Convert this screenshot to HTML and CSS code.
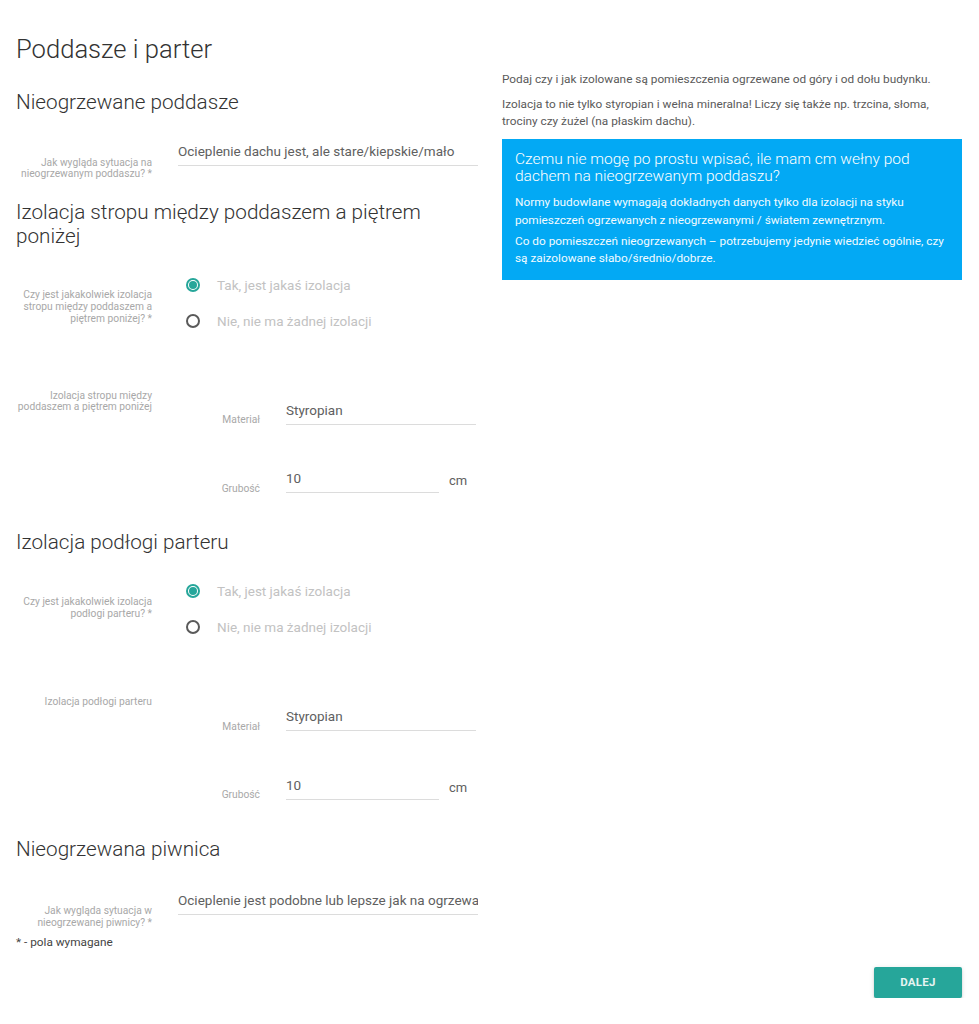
FILE: index.html
```html
<!DOCTYPE html>
<html lang="pl">
<head>
<meta charset="utf-8">
<title>Poddasze i parter</title>
<link rel="stylesheet" href="styles.css">
</head>
<body>
<div class="page">
  <div class="columns">
    <main class="left">
      <h1 class="title">Poddasze i parter</h1>

      <h2 class="section-title st-first">Nieogrzewane poddasze</h2>
      <div class="field f-first">
        <div class="field-label">Jak wygląda sytuacja na nieogrzewanym poddaszu? *</div>
        <div class="input">Ocieplenie dachu jest, ale stare/kiepskie/mało</div>
      </div>

      <h2 class="section-title st-after-field">Izolacja stropu między poddaszem a piętrem poniżej</h2>
      <div class="radio-field">
        <div class="radio-label">Czy jest jakakolwiek izolacja stropu między poddaszem a piętrem poniżej? *</div>
        <div class="radio-options">
          <div class="radio-option">
            <svg class="radio" width="14" height="14" viewBox="0 0 14 14"><circle cx="7" cy="7" r="6" fill="none" stroke="#26a69a" stroke-width="2"/><circle cx="7" cy="7" r="4" fill="#26a69a"/></svg>
            <span class="radio-text">Tak, jest jakaś izolacja</span>
          </div>
          <div class="radio-option">
            <svg class="radio" width="14" height="14" viewBox="0 0 14 14"><circle cx="7" cy="7" r="6" fill="none" stroke="#5a5a5a" stroke-width="2"/></svg>
            <span class="radio-text">Nie, nie ma żadnej izolacji</span>
          </div>
        </div>
      </div>
      <div class="group">
        <div class="group-label">Izolacja stropu między poddaszem a piętrem poniżej</div>
        <div class="subfields">
          <div class="subfield">
            <div class="sub-label">Materiał</div>
            <div class="input">Styropian</div>
          </div>
          <div class="subfield">
            <div class="sub-label">Grubość</div>
            <div class="thickness">
              <div class="input input-short">10</div>
              <span class="unit">cm</span>
            </div>
          </div>
        </div>
      </div>

      <h2 class="section-title st-after-group">Izolacja podłogi parteru</h2>
      <div class="radio-field">
        <div class="radio-label">Czy jest jakakolwiek izolacja podłogi parteru? *</div>
        <div class="radio-options">
          <div class="radio-option">
            <svg class="radio" width="14" height="14" viewBox="0 0 14 14"><circle cx="7" cy="7" r="6" fill="none" stroke="#26a69a" stroke-width="2"/><circle cx="7" cy="7" r="4" fill="#26a69a"/></svg>
            <span class="radio-text">Tak, jest jakaś izolacja</span>
          </div>
          <div class="radio-option">
            <svg class="radio" width="14" height="14" viewBox="0 0 14 14"><circle cx="7" cy="7" r="6" fill="none" stroke="#5a5a5a" stroke-width="2"/></svg>
            <span class="radio-text">Nie, nie ma żadnej izolacji</span>
          </div>
        </div>
      </div>
      <div class="group">
        <div class="group-label">Izolacja podłogi parteru</div>
        <div class="subfields">
          <div class="subfield">
            <div class="sub-label">Materiał</div>
            <div class="input">Styropian</div>
          </div>
          <div class="subfield">
            <div class="sub-label">Grubość</div>
            <div class="thickness">
              <div class="input input-short">10</div>
              <span class="unit">cm</span>
            </div>
          </div>
        </div>
      </div>

      <h2 class="section-title st-after-group">Nieogrzewana piwnica</h2>
      <div class="field f-last">
        <div class="field-label">Jak wygląda sytuacja w nieogrzewanej piwnicy? *</div>
        <div class="input">Ocieplenie jest podobne lub lepsze jak na ogrzewa</div>
      </div>

      <p class="required-note">* - pola wymagane</p>
    </main>

    <aside class="right">
      <p class="intro">Podaj czy i jak izolowane są pomieszczenia ogrzewane od góry i od dołu budynku.</p>
      <p class="intro intro-last">Izolacja to nie tylko styropian i wełna mineralna! Liczy się także np. trzcina, słoma, trociny czy żużel (na płaskim dachu).</p>
      <div class="info">
        <h3 class="info-title">Czemu nie mogę po prostu wpisać, ile mam cm wełny pod dachem na nieogrzewanym poddaszu?</h3>
        <p class="info-text">Normy budowlane wymagają dokładnych danych tylko dla izolacji na styku pomieszczeń ogrzewanych z nieogrzewanymi / światem zewnętrznym.</p>
        <p class="info-text">Co do pomieszczeń nieogrzewanych – potrzebujemy jedynie wiedzieć ogólnie, czy są zaizolowane słabo/średnio/dobrze.</p>
      </div>
    </aside>
  </div>

  <div class="footer">
    <button class="btn" type="button">DALEJ</button>
  </div>
</div>
</body>
</html>
```

FILE: styles.css
```css
html, body {
  margin: 0;
  padding: 0;
  background: #ffffff;
}

body {
  font-family: Roboto, "Liberation Sans", Arial, sans-serif;
  color: #444;
}

.page {
  width: 979px;
  box-sizing: border-box;
  padding: 0 17px 0 16px;
}

.columns {
  display: flex;
  gap: 24px;
}

.left {
  width: 462px;
  flex: none;
}

.right {
  width: 460px;
  flex: none;
  padding-top: 71px;
}

/* headings */
.title {
  margin: 34px 0 0;
  font-size: 25.6px;
  line-height: 30px;
  font-weight: 300;
  color: #333;
}

.section-title {
  margin: 0;
  font-size: 20.7px;
  line-height: 24px;
  font-weight: 300;
  color: #333;
}

.st-first { margin-top: 26px; }
.st-after-field { margin-top: 21px; }
.st-after-group { margin-top: 35px; }

/* simple field */
.field {
  display: grid;
  grid-template-columns: 136px 300px;
  column-gap: 26px;
  align-items: start;
}

.f-first { margin-top: 23px; }
.f-last { margin-top: 25px; }

.field-label,
.radio-label,
.group-label,
.sub-label {
  font-size: 10.25px;
  line-height: 11.2px;
  color: #a8a8a8;
  text-align: right;
}

.field-label { padding-top: 19.5px; }

.input {
  height: 28px;
  line-height: 28px;
  border-bottom: 1px solid #dcdcdc;
  font-size: 13.5px;
  color: #606060;
  white-space: nowrap;
  overflow: hidden;
}

/* radio field */
.radio-field {
  display: grid;
  grid-template-columns: 136px 300px;
  column-gap: 26px;
  margin-top: 19px;
}

.radio-label {
  padding-top: 22.5px;
  line-height: 11.6px;
}

.radio-option {
  height: 36px;
  display: flex;
  align-items: center;
  padding-left: 8px;
}

.radio {
  flex: none;
  display: block;
}

.radio-text {
  margin-left: 17px;
  font-size: 13.5px;
  color: #c2c2c2;
}

/* grouped fields */
.group {
  display: grid;
  grid-template-columns: 136px 300px;
  column-gap: 26px;
  margin-top: 51px;
}

.group-label {
  padding-top: 1px;
  line-height: 10.7px;
}

.subfields {
  padding-top: 6px;
}

.subfield {
  display: grid;
  grid-template-columns: 82px 190px;
  column-gap: 26px;
  align-items: start;
}

.subfield + .subfield {
  margin-top: 38.5px;
}

.sub-label {
  padding-top: 18.5px;
  line-height: 11.5px;
}

.thickness {
  display: flex;
  align-items: flex-start;
}

.input-short {
  width: 153px;
  flex: none;
}

.unit {
  margin-left: 10px;
  padding-top: 3px;
  line-height: 28px;
  font-size: 13px;
  color: #606060;
}

.required-note {
  margin: 7px 0 0;
  font-size: 11.8px;
  line-height: 14px;
  color: #444;
}

/* right column */
.intro {
  margin: 0 0 7px;
  font-size: 11.8px;
  line-height: 17.5px;
  color: #5a5a5a;
}

.intro-last {
  margin-bottom: 8.5px;
}

.info {
  background: #03a9f4;
  color: #ffffff;
  padding: 12px 13px 13px;
}

.info-title {
  margin: 0 0 8.6px;
  font-size: 15.5px;
  line-height: 17.3px;
  font-weight: 300;
}

.info-text {
  margin: 0;
  font-size: 11.8px;
  line-height: 17.4px;
  color: #f2fbff;
}

.info-text + .info-text {
  margin-top: 3.6px;
}

/* footer */
.footer {
  display: flex;
  justify-content: flex-end;
  margin-top: 18px;
}

.btn {
  width: 88px;
  height: 31px;
  border: none;
  border-radius: 2px;
  background: #26a69a;
  color: #e6f4f2;
  font-family: Roboto, "Liberation Sans", Arial, sans-serif;
  font-size: 11.5px;
  font-weight: 700;
  letter-spacing: 0.3px;
  box-shadow: 0 2px 2px rgba(0, 0, 0, 0.14), 0 1px 5px rgba(0, 0, 0, 0.12);
  padding: 0;
}
```
